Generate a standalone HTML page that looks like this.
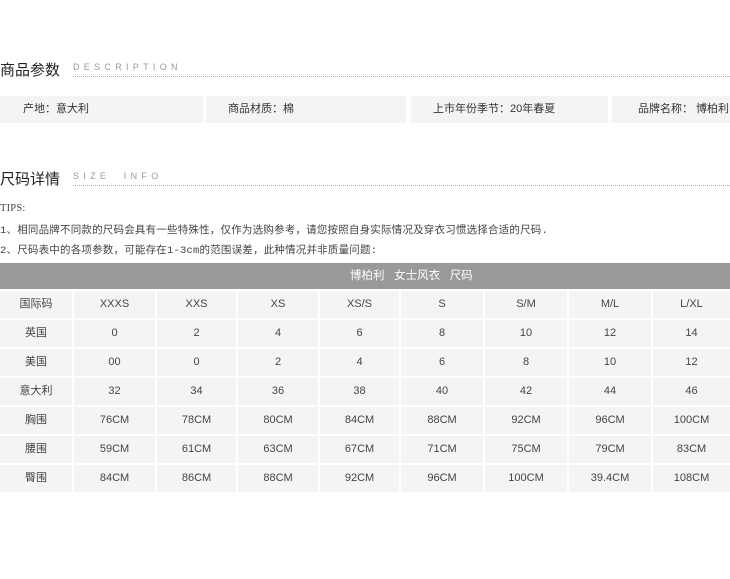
<!DOCTYPE html>
<html><head><meta charset="utf-8"><style>
body{margin:0;width:730px;height:579px;background:#fff;position:relative;overflow:hidden;font-family:"Liberation Sans","Noto Sans CJK SC",sans-serif;color:#333}
.a{position:absolute;white-space:nowrap}
.h{font-size:15px;color:#222}
.en{font-size:9px;letter-spacing:4.3px;color:#999}
.dot{position:absolute;left:73px;right:0;border-top:1px dotted #aaa}
.box{position:absolute;top:96px;height:27px;background:#f4f4f4;font-size:11px;line-height:27px;color:#333}
.t{font-size:10.5px;letter-spacing:0.2px;color:#444;font-family:"Liberation Mono","Noto Sans CJK SC",sans-serif}
.c{position:absolute;height:27px;line-height:27px;background:#f4f4f4;text-align:center;font-size:11px;color:#444}
</style></head><body>
<div class="a h" style="left:0;top:59px">商品参数</div>
<div class="a en" style="left:73px;top:62px">DESCRIPTION</div>
<div class="dot" style="top:76px"></div>
<div class="box" style="left:0;width:203px"><span style="margin-left:23px">产地：意大利</span></div>
<div class="box" style="left:206px;width:200px"><span style="margin-left:22px">商品材质：棉</span></div>
<div class="box" style="left:411px;width:197px"><span style="margin-left:22px">上市年份季节：20年春夏</span></div>
<div class="box" style="left:612px;width:118px"><span style="margin-left:26px">品牌名称：  博柏利</span></div>
<div class="a h" style="left:0;top:168px">尺码详情</div>
<div class="a en" style="left:73px;top:171px">SIZE&nbsp;&nbsp;INFO</div>
<div class="dot" style="top:185px"></div>
<div class="a t" style="left:0;top:203px;font-family:'Liberation Serif',serif">TIPS:</div>
<div class="a t" style="left:0;top:222px">1、相同品牌不同款的尺码会具有一些特殊性，仅作为选购参考，请您按照自身实际情况及穿衣习惯选择合适的尺码.</div>
<div class="a t" style="left:0;top:242px">2、尺码表中的各项参数，可能存在1-3cm的范围误差，此种情况并非质量问题:</div>
<div class="a" style="left:0;top:263px;width:730px;height:26px;background:#999"></div>
<div class="a" style="left:350px;top:263px;height:26px;color:#fff;font-size:11.5px;line-height:26px">博柏利&nbsp;&nbsp;&nbsp;女士风衣&nbsp;&nbsp;&nbsp;尺码</div>
<div id="tb"></div>
<script>
var xs=[0,74,157,238,320,401,485,569,653,730];
var rows=[["国际码","XXXS","XXS","XS","XS/S","S","S/M","M/L","L/XL"],
["英国","0","2","4","6","8","10","12","14"],
["美国","00","0","2","4","6","8","10","12"],
["意大利","32","34","36","38","40","42","44","46"],
["胸围","76CM","78CM","80CM","84CM","88CM","92CM","96CM","100CM"],
["腰围","59CM","61CM","63CM","67CM","71CM","75CM","79CM","83CM"],
["臀围","84CM","86CM","88CM","92CM","96CM","100CM","39.4CM","108CM"]];
var h="";
for(var r=0;r<rows.length;r++)for(var c=0;c<9;c++){
var w=xs[c+1]-xs[c]-(c<8?2:0);
h+='<div class="c" style="left:'+xs[c]+'px;top:'+(291+r*29)+'px;width:'+w+'px">'+rows[r][c]+'</div>';}
document.getElementById("tb").innerHTML=h;
</script>
</body></html>
